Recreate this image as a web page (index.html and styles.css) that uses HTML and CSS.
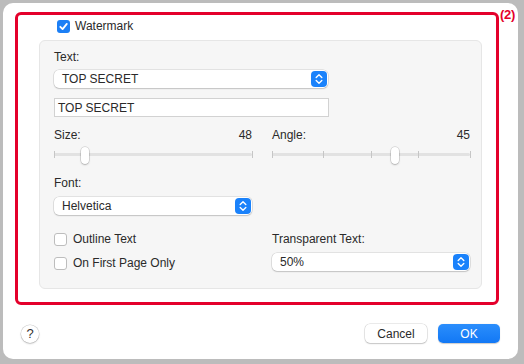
FILE: index.html
```html
<!DOCTYPE html>
<html>
<head>
<meta charset="utf-8">
<link rel="stylesheet" href="styles.css">
</head>
<body>
<div class="window">
  <section class="redbox">
    <div class="header">
      <span class="cb checked"><svg viewBox="0 0 13 13" width="13" height="13"><path d="M3.3 6.8 L5.6 9.1 L9.8 3.9" fill="none" stroke="#fff" stroke-width="1.8" stroke-linecap="round" stroke-linejoin="round"/></svg></span>
      <span class="txt">Watermark</span>
    </div>
    <div class="panel">
      <div class="label">Text:</div>
      <div class="popup wide"><span class="val">TOP SECRET</span><span class="stepper"><svg viewBox="0 0 16 16" width="16" height="16"><path d="M5.2 6.4 L8 3.8 L10.8 6.4 M5.2 9.6 L8 12.2 L10.8 9.6" fill="none" stroke="#fff" stroke-width="1.4" stroke-linecap="round" stroke-linejoin="round"/></svg></span></div>
      <div class="field">TOP SECRET</div>
      <div class="cols sliders">
        <div class="col">
          <div class="row-label"><span>Size:</span><span>48</span></div>
          <div class="slider">
            <span class="track"></span>
            <span class="tick" style="left:0%"></span>
            <span class="tick" style="left:100%"></span>
            <span class="knob" style="left:15.8%"></span>
          </div>
        </div>
        <div class="col">
          <div class="row-label"><span>Angle:</span><span>45</span></div>
          <div class="slider">
            <span class="track"></span>
            <span class="tick" style="left:0%"></span>
            <span class="tick" style="left:26%"></span>
            <span class="tick" style="left:50.3%"></span>
            <span class="tick" style="left:74%"></span>
            <span class="tick" style="left:100%"></span>
            <span class="knob" style="left:62%"></span>
          </div>
        </div>
      </div>
      <div class="label font-label">Font:</div>
      <div class="popup narrow"><span class="val">Helvetica</span><span class="stepper"><svg viewBox="0 0 16 16" width="16" height="16"><path d="M5.2 6.4 L8 3.8 L10.8 6.4 M5.2 9.6 L8 12.2 L10.8 9.6" fill="none" stroke="#fff" stroke-width="1.4" stroke-linecap="round" stroke-linejoin="round"/></svg></span></div>
      <div class="cols bottom">
        <div class="col checks">
          <div class="check-row"><span class="cb"></span><span class="txt">Outline Text</span></div>
          <div class="check-row"><span class="cb"></span><span class="txt">On First Page Only</span></div>
        </div>
        <div class="col">
          <div class="label">Transparent Text:</div>
          <div class="popup narrow"><span class="val">50%</span><span class="stepper"><svg viewBox="0 0 16 16" width="16" height="16"><path d="M5.2 6.4 L8 3.8 L10.8 6.4 M5.2 9.6 L8 12.2 L10.8 9.6" fill="none" stroke="#fff" stroke-width="1.4" stroke-linecap="round" stroke-linejoin="round"/></svg></span></div>
        </div>
      </div>
    </div>
  </section>
  <footer class="footer">
    <span class="help">?</span>
    <span class="spacer"></span>
    <button class="btn">Cancel</button>
    <button class="btn primary">OK</button>
  </footer>
</div>
<div class="badge">(2)</div>
</body>
</html>
```

FILE: styles.css
```css
* { box-sizing: border-box; }
html, body { margin: 0; padding: 0; }
body {
  width: 524px;
  height: 364px;
  overflow: hidden;
  background: #bcbcbc;
  padding: 3px 0 0 3px;
  font-family: "Liberation Sans", Arial, sans-serif;
  font-size: 12px;
  color: #2a2a2a;
  position: relative;
}
.window {
  width: 515px;
  height: 356px;
  background: #fff;
  border-radius: 10px;
  padding: 9px 0 0 12px;
  display: flex;
  flex-direction: column;
}
.redbox {
  width: 484px;
  height: 293px;
  border: 3px solid #e4002b;
  border-radius: 6px;
  display: flex;
  flex-direction: column;
}
.header {
  display: flex;
  align-items: center;
  height: 13px;
  margin: 5px 0 0 39px;
  gap: 5px;
  line-height: 13px;
}
.cb {
  width: 13px;
  height: 13px;
  border-radius: 3px;
  background: #fff;
  border: 1px solid #bdbdbd;
  flex: none;
  display: inline-flex;
}
.cb.checked {
  background: #1c7ff5;
  border: none;
}
.panel {
  margin: 7px 0 0 21px;
  width: 443px;
  height: 249px;
  background: #f6f6f6;
  border: 1px solid #e6e6e6;
  border-radius: 6px;
  padding: 8px 11px 0 14px;
}
.label {
  height: 16px;
  line-height: 16px;
}
.popup {
  margin-top: 5px;
  height: 18px;
  background: #fff;
  border-radius: 5px;
  box-shadow: 0 0 0 0.5px rgba(0,0,0,0.16), 0 1px 1.5px rgba(0,0,0,0.14);
  display: flex;
  align-items: center;
  justify-content: space-between;
  padding: 0 1px 0 8px;
  line-height: 18px;
}
.popup.wide { width: 274px; }
.popup.narrow { width: 198px; margin-top: 6px; }
.stepper {
  width: 16px;
  height: 16px;
  border-radius: 4px;
  background: #1a82fb;
  display: inline-flex;
}
.field {
  margin-top: 10px;
  width: 275px;
  height: 19px;
  background: #fff;
  border: 1px solid #d2d2d2;
  padding-left: 3px;
  line-height: 18px;
}
.cols {
  display: grid;
  grid-template-columns: 198px 198px;
  column-gap: 20px;
}
.sliders { margin-top: 10px; }
.row-label {
  display: flex;
  justify-content: space-between;
  height: 16px;
  line-height: 16px;
}
.slider {
  position: relative;
  height: 23px;
}
.track {
  position: absolute;
  left: 0;
  right: 0;
  top: 10px;
  height: 3px;
  border-radius: 2px;
  background: #e2e2e2;
}
.tick {
  position: absolute;
  top: 8px;
  width: 1px;
  height: 7px;
  background: #c6c6c6;
  margin-left: -0.5px;
}
.knob {
  position: absolute;
  top: 4px;
  width: 8px;
  height: 17px;
  margin-left: -4px;
  border-radius: 4px;
  background: #fff;
  box-shadow: 0 0 0 0.5px rgba(0,0,0,0.2), 0 1px 2px rgba(0,0,0,0.2);
}
.font-label { margin-top: 9px; }
.bottom { margin-top: 16px; }
.checks {
  display: flex;
  flex-direction: column;
  gap: 8px;
}
.check-row {
  display: flex;
  align-items: center;
  gap: 6px;
  height: 16px;
  line-height: 16px;
}
.footer {
  margin-top: 19px;
  margin-left: 6px;
  width: 479px;
  height: 19px;
  display: flex;
  align-items: center;
}
.help {
  width: 18px;
  height: 18px;
  border-radius: 50%;
  background: #fff;
  box-shadow: 0 0 0 0.5px rgba(0,0,0,0.18), 0 1px 2px rgba(0,0,0,0.18);
  display: inline-flex;
  align-items: center;
  justify-content: center;
  font-size: 13px;
  color: #333;
}
.spacer { flex: 1; }
.btn {
  font-family: "Liberation Sans", Arial, sans-serif;
  font-size: 12px;
  width: 62px;
  height: 19px;
  border: none;
  border-radius: 5px;
  background: #fff;
  color: #2a2a2a;
  box-shadow: 0 0 0 0.5px rgba(0,0,0,0.16), 0 1px 1.5px rgba(0,0,0,0.16);
  padding: 0;
  margin-left: 11px;
}
.btn.primary {
  background: linear-gradient(#2b8efc, #1278f5);
  color: #fff;
  box-shadow: 0 0.5px 1px rgba(0,0,0,0.2);
}
.badge {
  position: absolute;
  left: 500px;
  top: 7px;
  color: #e4002b;
  font-weight: bold;
  font-size: 13px;
  line-height: 15px;
  letter-spacing: -0.3px;
}
```
